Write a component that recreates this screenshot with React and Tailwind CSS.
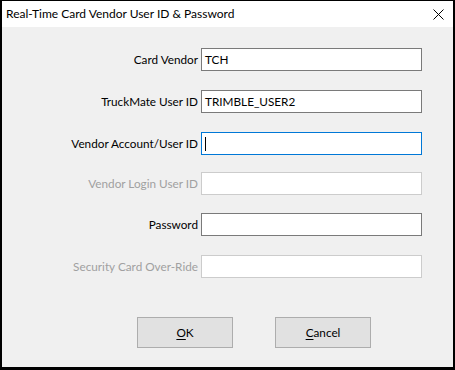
import React from 'react';

const rows = [
    { label: 'Card Vendor', value: 'TCH', mt: 'mt-[21px]' },
    { label: 'TruckMate User ID', value: 'TRIMBLE_USER2', mt: 'mt-[19px]' },
    { label: 'Vendor Account/User ID', value: '', mt: 'mt-[19px]', focused: true },
    { label: 'Vendor Login User ID', value: '', mt: 'mt-[17px]', disabled: true },
    { label: 'Password', value: '', mt: 'mt-[18px]' },
    { label: 'Security Card Over-Ride', value: '', mt: 'mt-[19px]', disabled: true },
];

function Field({ label, value, mt, focused, disabled }) {
    const border = focused ? 'border-[#0078d7]' : disabled ? 'border-[#cccccc]' : 'border-[#7a7a7a]';
    return (
        <div className={`flex items-center ${mt}`}>
            <div className={`w-[196px] text-right pt-px ${disabled ? 'text-[#a0a0a0]' : 'text-black'}`}>{label}</div>
            <div className={`ml-[3px] w-[221px] h-[23px] bg-white border ${border} flex items-center pl-[3px] pt-px`}>
                {value}
                {focused && <span className="w-px h-[14px] bg-black" />}
            </div>
        </div>
    );
}

export default function App() {
    return (
        <div
            className="w-[455px] h-[370px] bg-black pt-px pl-[2px] pr-[2px] pb-[3px] text-[11.75px] leading-none"
            style={{ fontFamily: 'Lato, "Liberation Sans", Arial, sans-serif' }}
        >
            <div className="flex flex-col h-full">
                <div className="h-[26px] bg-white flex items-center justify-between pl-[4px] pr-[9px]">
                    <span className="text-black text-[12px]">Real-Time Card Vendor User ID &amp; Password</span>
                    <svg width="11" height="11" viewBox="0 0 11 11" className="text-black">
                        <path d="M0.5 0.5 L10.5 10.5 M10.5 0.5 L0.5 10.5" stroke="currentColor" strokeWidth="1" />
                    </svg>
                </div>
                <div className="flex-1 bg-[#f0f0f0]">
                    {rows.map((r) => (
                        <Field key={r.label} {...r} />
                    ))}
                    <div className="flex mt-[39px] ml-[135px] gap-[42px]">
                        <button className="w-[96px] h-[31px] bg-[#e1e1e1] border border-[#adadad] text-black">
                            <span className="underline underline-offset-2">O</span>K
                        </button>
                        <button className="w-[96px] h-[31px] bg-[#e1e1e1] border border-[#adadad] text-black">
                            <span className="underline underline-offset-2">C</span>ancel
                        </button>
                    </div>
                </div>
            </div>
        </div>
    );
}
